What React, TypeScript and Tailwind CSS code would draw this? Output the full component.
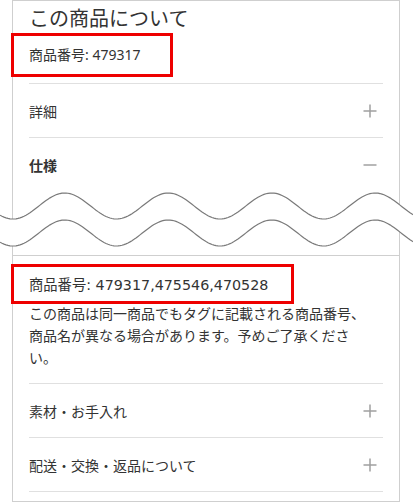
import React from 'react';

const font = { fontFamily: '"Noto Sans CJK JP", "Noto Sans", sans-serif' };
const numFont = { fontFamily: '"Noto Sans", "Noto Sans CJK JP", sans-serif' };
const numFontWide = { fontFamily: '"DejaVu Sans", "Noto Sans CJK JP", sans-serif' };

// wavy "cut" mark drawn across the card
const wavePath = (cy: number) => {
  const pts: string[] = [];
  for (let x = -2; x <= 415; x += 2) {
    const y = cy + 13 * Math.cos((2 * Math.PI * (x - 13)) / 103.5);
    pts.push(`${x},${y.toFixed(2)}`);
  }
  return pts;
};

const CutMark = () => {
  const top = wavePath(18);
  const bottom = wavePath(45);
  const band = `M${top.join(' L')} L${[...bottom].reverse().join(' L')} Z`;
  return (
    <svg className="absolute left-0 top-[188px] pointer-events-none" width="413" height="64" viewBox="0 0 413 64">
      <path d={band} fill="#fff" />
      <path d={`M${top.join(' L')}`} fill="none" stroke="#7a7a7a" strokeWidth="1.2" />
      <path d={`M${bottom.join(' L')}`} fill="none" stroke="#7a7a7a" strokeWidth="1.2" />
    </svg>
  );
};

const Plus = () => (
  <svg width="14" height="14" viewBox="0 0 14 14">
    <path d="M7 0.5V13.5M0.5 7H13.5" stroke="#a0a0a0" strokeWidth="1.5" />
  </svg>
);

const Minus = () => (
  <svg width="14" height="14" viewBox="0 0 14 14">
    <path d="M0.5 7H13.5" stroke="#a0a0a0" strokeWidth="1.5" />
  </svg>
);

const Row = ({ label, open, bold, border = true }: { label: string; open?: boolean; bold?: boolean; border?: boolean }) => (
  <div className={`h-[54px] flex items-center justify-between pr-[6px] ${border ? 'border-b border-[#e0e0e0]' : ''}`}>
    <span className={`text-[14px] leading-[20px] text-[#333] ${bold ? 'font-bold' : ''}`}>{label}</span>
    {open ? <Minus /> : <Plus />}
  </div>
);

export default function App() {
  return (
    <div className="relative w-[413px] h-[502px] bg-white overflow-hidden" style={font}>
      <div className="ml-[12px] w-[388px] h-[502px] border border-[#cfcfcf] px-[16px]">
        {/* Upper part */}
        <h2 className="pt-[3px] text-[20px] leading-[28px] text-[#333]">この商品について</h2>
        <div className="pt-[13px] pb-[18px] border-b border-[#e0e0e0]">
          <div className="relative text-[14px] leading-[20px] text-[#333]" style={numFont}>
            商品番号: 479317
            <span className="absolute left-[-18px] top-[-12px] w-[162px] h-[44px] border-[3px] border-[#ee0000]" />
          </div>
        </div>
        <Row label="詳細" />
        <Row label="仕様" open bold border={false} />

        <div className="h-[63px]" />

        {/* Lower part */}
        <div className="-mx-[16px] px-[16px] border-t border-[#cfcfcf]">
          <div className="pt-[19px] pb-[15px] border-b border-[#e0e0e0]">
            <div className="relative text-[14.3px] leading-[20px] text-[#333]" style={numFontWide}>
              商品番号: 479317,475546,470528
              <span className="absolute left-[-18px] top-[-11px] w-[283px] h-[40px] border-[3px] border-[#ee0000]" />
            </div>
            <p className="mt-[7px] w-[342px] text-[14px] leading-[22px] text-[#333]">
              この商品は同一商品でもタグに記載される商品番号、商品名が異なる場合があります。予めご了承ください。
            </p>
          </div>
          <Row label="素材・お手入れ" />
          <Row label="配送・交換・返品について" />
        </div>
      </div>
      <CutMark />
    </div>
  );
}
